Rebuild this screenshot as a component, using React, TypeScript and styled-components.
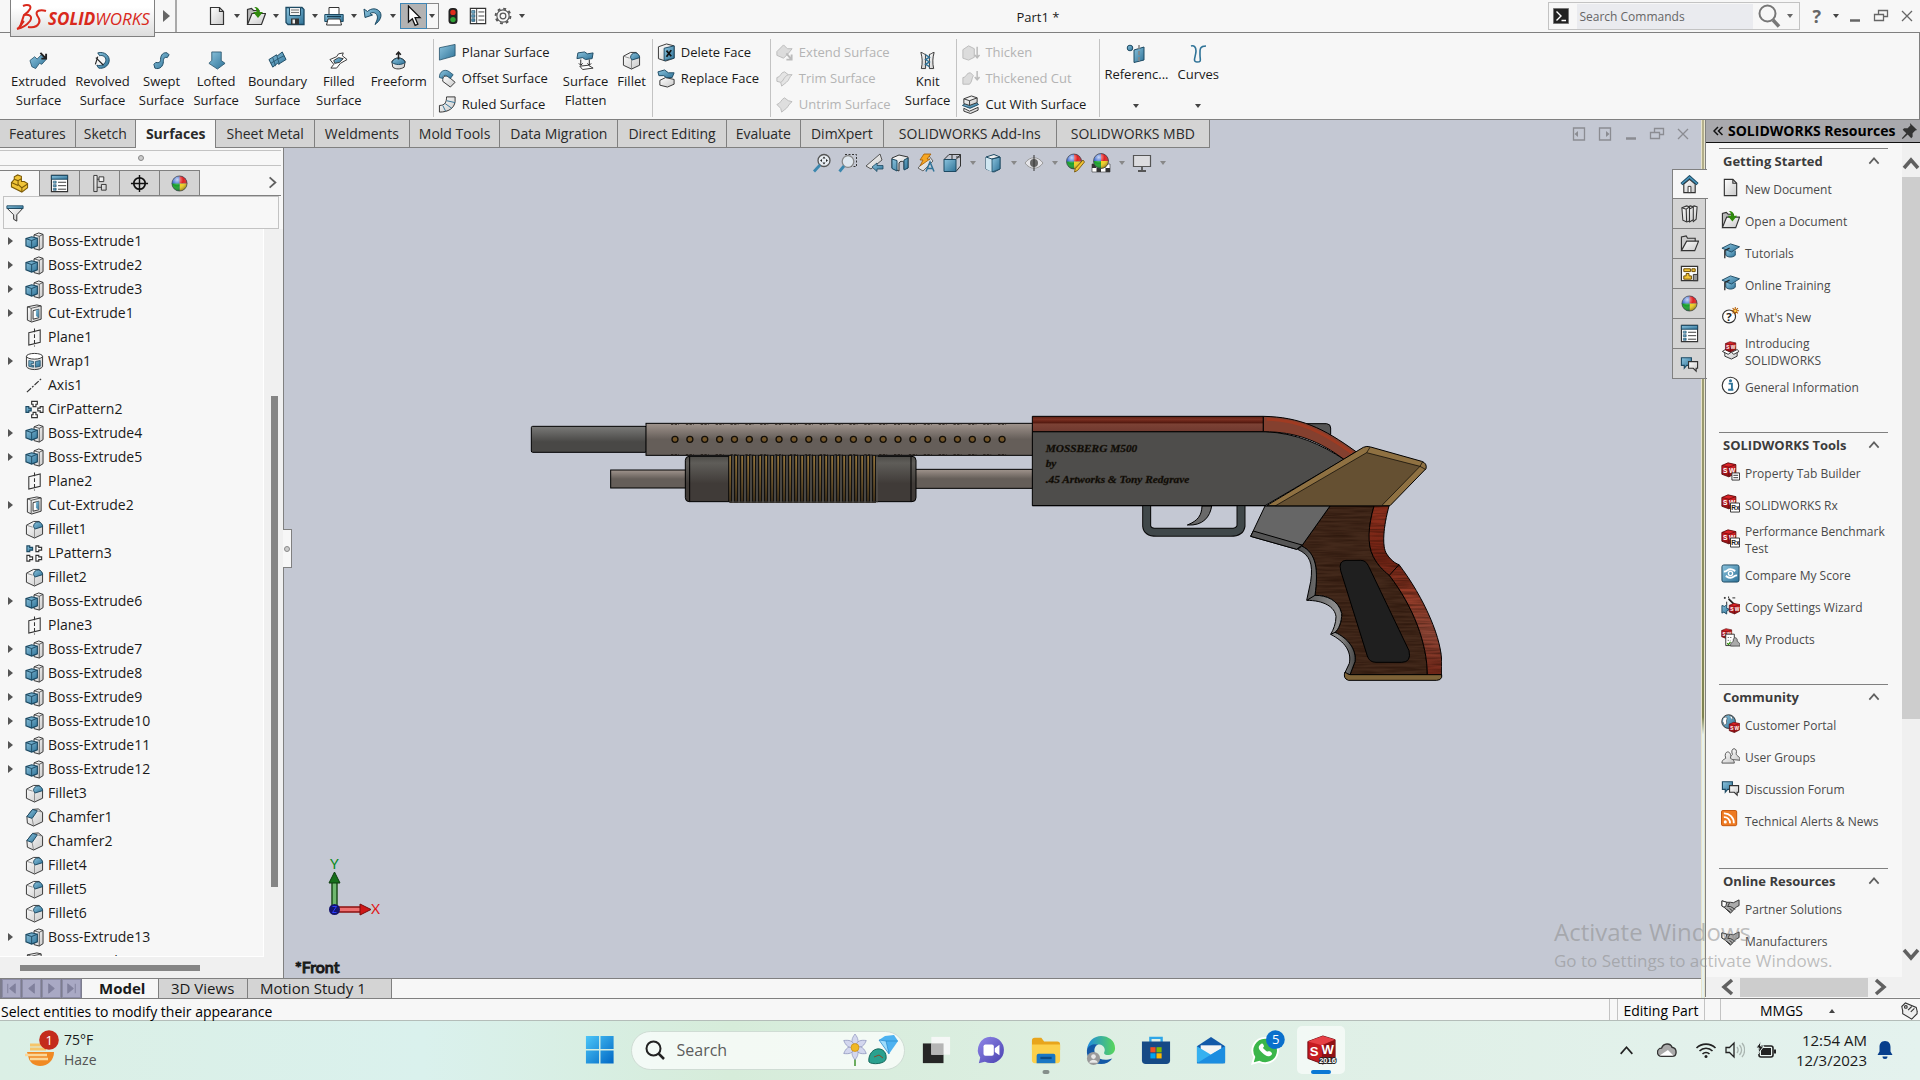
import React from 'react';
import styled, { createGlobalStyle, css } from 'styled-components';

/* ---------- theme ---------- */
const C = {
  face: '#f7f7f7',
  line: '#808080',
  soft: '#c3c3c3',
  tab: '#d4d4d4',
  view: '#c4c8d3',
  track: '#f0f0f0',
  text: '#1a1a1a',
};
const UI = '"Open Sans", "Noto Sans", sans-serif';

const Global = createGlobalStyle`
  *, *::before, *::after { box-sizing: border-box; }
  body { margin: 0; background: ${C.face}; font-family: ${UI}; color: ${C.text}; overflow: hidden; }
  button, input { font: inherit; color: inherit; }
  button { background: none; border: 0; padding: 0; margin: 0; }
  ul { list-style: none; margin: 0; padding: 0; }
  a { color: inherit; text-decoration: none; }
  h1, h2, p { margin: 0; font-weight: inherit; font-size: inherit; }
  svg { display: block; flex: none; }
`;

/* ---------- icons ---------- */
const K = '#333';
const B = 'url(#gBlue)';
const G = 'url(#gGrey)';
const R = 'url(#gRed)';
const BD = '#1d4a63';

const Defs = styled.svg`
  position: absolute;
  width: 0;
  height: 0;
`;

const Gradients = () => (
  <Defs aria-hidden="true">
    <defs>
      <linearGradient id="gBlue" x1="0" y1="0" x2="1" y2="1">
        <stop offset="0" stopColor="#8cc4de" />
        <stop offset="1" stopColor="#2f7398" />
      </linearGradient>
      <linearGradient id="gGrey" x1="0" y1="0" x2="1" y2="1">
        <stop offset="0" stopColor="#ffffff" />
        <stop offset="1" stopColor="#c9c9c9" />
      </linearGradient>
      <linearGradient id="gRed" x1="0" y1="0" x2="0" y2="1">
        <stop offset="0" stopColor="#e8262b" />
        <stop offset="1" stopColor="#8c1014" />
      </linearGradient>
      <radialGradient id="gShine" cx=".35" cy=".25" r=".8">
        <stop offset="0" stopColor="#fff" stopOpacity=".75" />
        <stop offset=".5" stopColor="#fff" stopOpacity="0" />
        <stop offset="1" stopColor="#000" stopOpacity=".45" />
      </radialGradient>
    </defs>
  </Defs>
);

const Ball = ({ x = 10, y = 10, r = 8 }) => (
  <g transform={`translate(${x} ${y})`}>
    <circle r={r} fill="#2b5fd0" />
    <path d={`M0 0V${-r}A${r} ${r} 0 0 1 ${r} 0Z`} fill="#e02020" />
    <path d={`M0 0H${r}A${r} ${r} 0 0 1 0 ${r}Z`} fill="#f2d11c" />
    <path d={`M0 0V${r}A${r} ${r} 0 0 1 ${-r} 0Z`} fill="#17a02a" />
    <circle r={r} fill="url(#gShine)" stroke="#444" strokeWidth=".7" />
  </g>
);

const Cube = ({ x = 0, y = 0, s = 1 }) => (
  <g transform={`translate(${x} ${y}) scale(${s})`}>
    <path d="M1 4L8 1l9 2v10l-8 4-8-3z" fill={R} stroke="#5a0a0c" />
    <path d="M1 4l8 2 8-3M9 6v11" fill="none" stroke="#5a0a0c" strokeWidth=".8" />
    <text x="2.4" y="12.4" fontFamily="Liberation Sans" fontWeight="700" fontSize="7.5" fill="#fff">S</text>
    <text x="9.2" y="12.4" fontFamily="Liberation Sans" fontWeight="700" fontSize="7.5" fill="#fff">W</text>
  </g>
);

const Bubbles = () => (
  <g strokeWidth="1.2">
    <path d="M1.500 4h10.500v8H7l-2.500 3v-3h-3z" fill={B} stroke={BD} />
    <path d="M9 8h9.500v7H17v3l-3-3H9z" fill={G} stroke={K} />
  </g>
);

const icons: Record<string, React.ReactNode> = {
  doc: <g stroke={K} strokeWidth="1.2"><path d="M3.500 1.500h9l4 4v13h-13z" fill={G} /><path d="M12.500 1.500v4h4" fill="none" /></g>,
  open: <g><path d="M1.500 18V3.500l4-1 2 2H13V8" fill="#bbb" stroke={K} strokeWidth="1.200" /><path d="M1.500 18.500L6 7.500h13.500l-4 11z" fill={G} stroke={K} strokeWidth="1.200" /><path d="M8 1c4 0 5.500 2 5.500 5H17l-5 6-5-6h3.500C10.500 3.500 10 2 8 1z" fill="#2f8a0c" /></g>,
  save: <g><path d="M1 1.500h16l2 2v15H3l-2-2z" fill={B} stroke={BD} strokeWidth="1.300" /><path d="M4.500 1.500h11v8h-11z" fill="#f2f2f2" stroke={BD} /><path d="M6 4h8M6 6.500h8" stroke="#777" /><path d="M6 12.500h8v6H6z" fill="#333" /><path d="M7.500 13.500h2.500v4H7.500z" fill="#eee" /></g>,
  print: <g><path d="M5 8V1.500h10V8" fill="#fff" stroke={K} /><path d="M.8 8.500h18.400v7H.8z" fill={B} stroke={BD} /><path d="M4 13h12l1.500 6h-15z" fill="#fff" stroke={K} /><path d="M3 10.500h14" stroke="#173c50" strokeWidth="1.500" /></g>,
  undo: <path d="M1 3l1 8.500L9.500 9 7 7.500c4-2.500 9 .5 7 6.500l-2 4.500C17 15 19.500 10 17 6 14 1.800 8 2 4.500 5.500z" fill={B} stroke={BD} />,
  cursor: <path d="M5 1v14.500l3.500-3 2.500 6 2.500-1-2.500-6h4.500z" fill="#fff" stroke="#111" strokeWidth="1.200" />,
  light: <g><rect x="5" y="1" width="10" height="18" rx="4" fill="#222" /><circle cx="10" cy="6" r="3" fill="#e02a1c" /><circle cx="10" cy="14" r="3" fill="#2fa335" /></g>,
  list: <g><path d="M1.500 1.500h17v17h-17z" fill="#fff" stroke={K} strokeWidth="1.300" /><path d="M8.500 2v16" stroke={K} /><path d="M3 4h3.500v3H3zM3 8.500h3.500v3H3zM3 13h3.500v3H3z" fill={B} stroke={BD} strokeWidth=".7" /><path d="M10.500 5.500H17M10.500 10H17M10.500 14.500H17" stroke={K} /></g>,
  gear: <g fill="none" stroke="#555"><circle cx="10" cy="10" r="3.200" strokeWidth="1.300" /><circle cx="10" cy="10" r="6.800" strokeWidth="1.200" /><circle cx="10" cy="10" r="8.200" strokeWidth="2.200" strokeDasharray="3.200 3.240" /></g>,
  extruded: <g><path d="M1 10l5-4 2.500 2.500L13 4l5 5-4.500 5-2.500-1-4 5.500-4-2z" fill={B} stroke={BD} strokeWidth=".8" /><path d="M12 2l6 6M18 3v5h-5" stroke="#222" strokeWidth="2" fill="none" /></g>,
  revolved: <g fill="none"><path d="M5 2c7-2 13 3 12 9-1 5-6 8-11 7l-2-3c5 1 9-1 9.500-5C14 6 10 4 7 5z" fill={B} stroke={BD} /><path d="M3 7l8 8M5 6L2.500 14" stroke="#222" strokeWidth="1.200" /></g>,
  swept: <path d="M2 14l2-2c4 1 5-1 5-3 0-5 3-8 7-7l2 2-2 3c-3-1-4 1-4 4 0 5-4 9-9 7z" fill={B} stroke={BD} />,
  lofted: <path d="M5 1h10v9l4 3-8 6-9-6 3-3z" fill={B} stroke={BD} strokeWidth=".8" />,
  boundary: <g><path d="M1 9l8-5 1 1 5-4 4 8-8 5-1-1-5 4z" fill={B} stroke={BD} /><path d="M3 13l8-5 6-3M9 4l3 10M5 7l3 9" stroke={BD} strokeWidth=".8" fill="none" /></g>,
  filled: <g stroke={K}><path d="M1 9l7-3 2-3 5-1-1 3 5 4-7 4-4 5-6 0 3-4z" fill="#fff" /><path d="M5 10l5-3 5 1-4 4-5 1z" fill={B} /></g>,
  freeform: <g><path d="M3 11c3-5 11-5 14 0l-1 6c-4 2.500-9 2.500-12 0z" fill={G} stroke={K} /><path d="M3 12c3-6 11-6 14 0-4 3-10 3-14 0z" fill={B} stroke={BD} /><path d="M10 9V2M7.500 4L10 1.200 12.500 4" stroke="#222" strokeWidth="1.600" fill="none" /></g>,
  planar: <path d="M1.500 5L18 1.500v12L1.500 18z" fill={B} stroke={BD} strokeWidth=".8" />,
  offset: <g><path d="M5 11c0-4 4-4 6-3l7 6-5 5-8-6z" fill={G} stroke={K} /><path d="M1.500 9C1 3 7-1 12 3l4 3-3 4-4-3c-2-1-4 0-4 3z" fill={B} stroke={BD} strokeWidth=".8" /></g>,
  ruled: <g><path d="M9 2h9v5C17 14 11 18 1.500 18L1.500 11C7 11 9 8 9 2z" fill={G} stroke={K} /><path d="M9 6l9 2M7.500 9l7 5M5 11l3 6" stroke="#2f7398" fill="none" /></g>,
  flatten: <g><path d="M2 2l7-1 3 2 6-1-1 6-7 1-3-2-6 1z" fill={B} stroke={BD} /><path d="M5 9v6M14 9v6M3 13l2 2 2-2M12 13l2 2 2-2" stroke="#222" fill="none" /><path d="M4 16l9-1 5 3-11 1.500z" fill="#fff" stroke={K} /></g>,
  fillet: <g><path d="M1.500 5.500L9 1.500l6 0 3.500 4.500v9L10 19l-8.500-4z" fill={G} stroke={K} /><path d="M9 7c0-3 2-5 5.500-5 3 1 4 3 4 5l-8 2.500z" fill={B} stroke={BD} /><path d="M10 9.500V19M1.500 5.500L8 7.500" stroke="#777" fill="none" strokeWidth=".8" /></g>,
  deleteFace: <g><path d="M1.500 4L10 1l8 2v13l-9 3-7.500-2.500z" fill={G} stroke={K} /><path d="M7.500 5.500L18 3v13L7.500 18.500z" fill={B} stroke={BD} /><path d="M10 8l5 6M15 7.500l-5 7" stroke="#111" strokeWidth="1.800" /></g>,
  replaceFace: <g><path d="M3 12l6-3 9 2v5l-7 3-8-2z" fill={G} stroke={K} /><path d="M1 3l7-2 4 3 6 0-2 5-6 0-3-2-5 0z" fill={B} stroke={BD} /></g>,
  ghost1: <g fill="#dcdcdc" stroke="#bbb"><path d="M2 9l7-7 4 4 5 0-4 5-5 5-7-3z" /><path d="M12 11l5 6M17.500 12v5.500H12" strokeWidth="2" fill="none" /></g>,
  ghost2: <g fill="#e4e4e4" stroke="#bbb"><path d="M2 9c4 0 4-6 8-6l4 3 4 0c-3 2-3 6-6 8l-5 4-1-4-4-1z" /><path d="M6 14c3-1 3-6 8-8" fill="none" /></g>,
  ghost3: <g fill="#dedede" stroke="#bbb"><path d="M2 10c4-1 4-5 8-7l4 3 4 1c-3 2-4 5-6 7l-5 4-1-4z" /></g>,
  knit: <g><path d="M3 1.500c2 0 3 2 5 2v15H3.500c1.500-6 1-12-.5-17z" fill={G} stroke={K} /><path d="M17 1.500c-2 0-3 2-5 2v15h4.500c-1.500-6-1-12 .5-17z" fill={G} stroke={K} /><path d="M8 4l4 2.500L8 9l4 2.500L8 14l4 2.500" stroke="#2f7398" strokeWidth="1.500" fill="none" /></g>,
  thicken: <g fill="#dcdcdc" stroke="#bbb"><path d="M2 7l6-4 6 3v9l-6 3-6-2z" /><path d="M17 4v11M14.500 12.500l2.500 3 2.500-3" strokeWidth="1.600" fill="none" /></g>,
  thickCut: <g fill="#dcdcdc" stroke="#bbb"><path d="M2 9c4 0 3-5 8-5l3 3c-2 3-1 6-4 9l-7 0z" /><path d="M17 2v9M14.500 8.500l2.500 3 2.500-3" strokeWidth="1.600" fill="none" /></g>,
  cutWith: <g stroke={K}><path d="M3 14l6 3 9-4v3l-8 3.500-7-2.500z" fill={G} /><path d="M1.500 11l8 3 9-4-2-2-12 1z" fill={B} stroke={BD} /><path d="M3 4l8-3 6 2v5l-8 3-6-2zM3 4l6 2 8-3M9 6v5" fill={G} /></g>,
  reference: <g><circle cx="4" cy="4" r="2.800" fill={B} stroke={BD} /><path d="M8 6l10-3v13L8 18.500z" fill={B} stroke={BD} /><path d="M13 1v18" stroke="#f0f0f0" strokeDasharray="4 2" strokeWidth="1.300" /><path d="M13 1v18" stroke="#222" strokeDasharray="4 2" strokeWidth=".8" /></g>,
  curves: <path d="M3 2c3-1 5 1 5 5 0 5-4 11 1 11s3-2 3-7-1-9 6-9" fill="none" stroke="#2f7398" strokeWidth="1.600" />,
  part: <g fill="#f0c437" stroke="#7b5a06" strokeWidth="1.100"><path d="M1.500 9l3-3.500V3l3.500-2 4 1.500V8l3 0 3.500 2v4.500l-6 4.500L1.500 13.500z" /><path d="M4.500 5.500L8.500 7v4l4 3.500V19M8.500 7L12 5M1.500 9l7 3M12.500 14.500l6-4" fill="none" /></g>,
  props: <g><path d="M1.500 1.500h17v17h-17z" fill="#fff" stroke={K} strokeWidth="1.200" /><path d="M1.500 1.500h17v4h-17z" fill={B} stroke={BD} /><path d="M3.500 7.500h3v2.200h-3zM3.500 11.200h3v2.200h-3zM3.500 15h3v2.200h-3z" fill={B} stroke={BD} strokeWidth=".6" /><path d="M8.500 8.700H17M8.500 12.300H17M8.500 16H17" stroke={K} /></g>,
  config: <g fill={G} stroke={K}><path d="M4 1.500h3.500v17H4z" /><path d="M9.500 3h5v5h-5zM12 11h5v6h-5z" /><path d="M7.500 5.500h2M7.500 14H12" /></g>,
  target: <g fill="none" stroke="#111" strokeWidth="1.800"><circle cx="10" cy="10" r="6" /><path d="M10 1v18M1 10h18" strokeWidth="1.500" /></g>,
  ball: <Ball />,
  filter: <g><path d="M1.500 5h17l-6.500 7v7l-3.500-2v-5z" fill={G} stroke={K} strokeWidth="1.100" /><path d="M1 2h18v3H1z" fill={B} stroke={BD} /></g>,
  boss: <g><path d="M9.500 3l5-2 4.500 1.500v14L15 19l-5.500-1.500z" fill={G} stroke={K} /><path d="M15 4.500V19M9.500 3l5.500 1.500 4-2" stroke={K} fill="none" strokeWidth=".8" /><path d="M1 7l6-2 6 1.500v8L7 17l-6-2.500z" fill={B} stroke={BD} strokeWidth="1.200" /><path d="M1 7l6 2 6-2.500M7 9v8" stroke={BD} fill="none" /></g>,
  cut: <g><path d="M2.500 3l10-2 4.500 1v14l-10 3-4.500-2z" fill={G} stroke={K} /><path d="M2.500 3l4 1.500v14M6.500 4.500L17 2" fill="none" stroke={K} strokeWidth=".8" /><path d="M8.500 7l6-1.500v9l-6 1.500z" fill="#fff" stroke={K} /><path d="M11.500 6.300l3-.8v9l-3-2z" fill={B} /></g>,
  plane: <g fill="none" stroke={K} strokeWidth="1.100"><path d="M4 5l12-3v13L4 18z" /><path d="M10 .5v19" strokeDasharray="4 2" /></g>,
  wrap: <g><path d="M1.500 4.500v11c3 4 14 4 17 0v-11" fill={G} stroke={K} /><ellipse cx="10" cy="4.500" rx="8.500" ry="3" fill="#fff" stroke={K} /><path d="M4 9l5 1v2H6.500v2H9v2l-5-1zM11 10l5-1v6l-5 1z" fill={B} stroke={BD} strokeWidth=".8" /></g>,
  axis: <path d="M2 17L18 2" stroke={K} strokeDasharray="6 1.500 2 1.500" strokeWidth="1.200" />,
  cir: <g fill="#fff" stroke={K} strokeWidth="1.200"><path d="M7 1.500h6v3h-1.500v2.500h-3V4.500H7zM7 18.500h6v-3h-1.500V13h-3v2.500H7zM19 7v6h-3v-1.500h-2.500v-3H16V7z" /><path d="M1 7v6h3v-1.500h2.500v-3H4V7z" fill={B} stroke={BD} /></g>,
  lin: <g fill="#fff" stroke={K} strokeWidth="1.200"><path d="M2 2v6h3V6.500h3v-3H5V2z" fill={B} stroke={BD} /><path d="M11.500 2v6h3V6.500h3v-3h-3V2zM2 12v6h3v-1.500h3v-3H5V12zM11.500 12v6h3v-1.500h3v-3h-3V12z" /></g>,
  chamfer: <g><path d="M2 9l6-7.500 6-.5 4.500 3.500v10L9 19l-6.500-3z" fill={G} stroke={K} /><path d="M2 9l6-7.500 5 1.500-5.500 8z" fill={B} stroke={BD} /><path d="M7.500 11L9 19M13 3l5.500 1.500" stroke="#777" fill="none" strokeWidth=".8" /></g>,
  zoomFit: <g><circle cx="12" cy="7.500" r="6" fill="#e8edf2" stroke="#555" strokeWidth="1.300" /><path d="M8 12L2 18.500" stroke="#3b87ae" strokeWidth="2.800" /><path d="M12 3.500l1.500 2h-3zM12 11.500l1.500-2h-3zM8 7.500l2-1.500v3zM16 7.500l-2-1.500v3z" fill="#222" /></g>,
  zoomArea: <g><path d="M7 1.500h11.500v12H13" stroke="#333" fill="none" strokeDasharray="2 1.500" /><circle cx="10" cy="8.500" r="5.800" fill="#dfe7ee" stroke="#888" strokeWidth="1.300" /><path d="M6 13l-4.500 5.500" stroke="#3b87ae" strokeWidth="2.800" /></g>,
  prev: <g><path d="M16 1l2 6-11 9-5-3z" fill={G} stroke="#555" /><path d="M8 14l5-4v2.500h6v3.500h-6V18.500z" fill={B} stroke={BD} strokeWidth=".8" /></g>,
  section: <g><path d="M2 5l7-3 9 2v11l-4 1V9c-2-1-4-1-5 1v8l-7-3z" fill={G} stroke={K} /><path d="M2 6l5 1.500V18l-5-2.500zM14 7l4-2v10l-4 2z" fill={B} stroke={BD} /></g>,
  bolt: <g><path d="M13 3l4 5-10 10-5-3z" fill={G} stroke="#666" /><path d="M8 1h7l-4 5h3L4 13l3-6H4z" fill="#f5a623" stroke="#a35a00" strokeWidth=".8" /><path d="M10 18.500L14 9l4 9.500M11.500 15.500h5" stroke="#2f7398" strokeWidth="1.500" fill="none" /></g>,
  orient: <g><path d="M2 6.500L7 1.500h11.500V13L14 18.500M14 6.500l4.500-5M10 1.500v5M14 4h4.500" fill="none" stroke={K} /><path d="M2 6.500h12v12H2z" fill={B} stroke={BD} /></g>,
  display: <g><path d="M3 4l8-2.500L17 4v12l-6 3-8-3z" fill={G} stroke={BD} /><path d="M3 4l6 2v13l-6-3z" fill="#cfe6f1" /><path d="M9 6l8-2v12l-8 3z" fill={B} stroke={BD} strokeWidth=".8" /><path d="M3 4l6 2 8-2" fill="none" stroke={BD} /></g>,
  eye: <g><path d="M1 10c5-7 13-7 18 0-5 7-13 7-18 0z" fill="#e4e4e8" stroke="#999" /><circle cx="10" cy="10" r="4" fill="#666" /><path d="M10 2v16" stroke="#333" /></g>,
  appear: <g><Ball x={9} y={8.5} r={7.5} /><path d="M18 7l1.500 2-7 8.500-3 1.500.8-3.500z" fill="#f0c437" stroke="#6b4a00" strokeWidth=".8" /></g>,
  scene: <g><path d="M1 11h18v8H1z" fill="#fff" stroke="#333" strokeWidth=".6" /><path d="M1 11h4.500v4H1zM10 11h4.500v4H10zM5.500 15H10v4H5.500zM14.500 15H19v4h-4.500z" fill="#333" /><Ball x={10} y={8} r={7.5} /></g>,
  monitor: <g><path d="M1.500 2.500h17v11h-17z" fill="#dcdcdf" stroke="#555" strokeWidth="1.200" /><path d="M10 13.500v4M6 18h8" stroke="#555" strokeWidth="1.800" /></g>,
  home: <g><path d="M4 9.500l6-5 6 5v9H4z" fill={G} stroke={K} strokeWidth="1.200" /><path d="M8.500 12h3v6.500h-3z" fill="#fff" stroke={K} /><path d="M1.500 9.500L10 2l8.500 7.500" stroke={BD} strokeWidth="3.200" fill="none" /><path d="M2 9.200L10 2.300l8 6.900" stroke="#4a97bd" strokeWidth="1.300" fill="none" /></g>,
  books: <g fill={G} stroke={K} strokeWidth="1.100"><path d="M10 4l5-2 3 1-1 13-3 2.500z" /><path d="M6 4l5-2 3 1v13.500L10 19z" /><path d="M2 4l5-2 3 1v15l-3 1-4-2z" /><path d="M2 4l4.500 1.500L10 3M6.500 5.500L7 19M14 3l-3.500 2" fill="none" /></g>,
  folder: <g fill={G} stroke={K} strokeWidth="1.200"><path d="M1.500 17V3l5-1 1.500 2.500h8V8" fill="#ccc" /><path d="M1.500 17.500L7 7.500h12.500L15.500 17.500z" /></g>,
  palette: <g><path d="M1.500 2.500h17v15h-17z" fill="#fff" stroke={K} strokeWidth="1.300" /><path d="M4 5h7v3H4zM12.500 5H16v3h-3.500zM6.500 10h3v2.500H12V16H4v-3.500h2.500z" fill="#f0c437" stroke="#6b4a00" /><path d="M14 11h4.500v6.500H14z" fill="#999" stroke={K} /></g>,
  bubbles: <Bubbles />,
  cap: <g><path d="M5 9v5c3 2.500 7 2.500 10 0V9" fill={B} stroke={BD} /><path d="M1 6.500L10 2l9.500 3L11 10.500z" fill={B} stroke={BD} /><path d="M9 6.500L4 9v8" fill="none" stroke="#222" strokeWidth="1.300" /></g>,
  whatsnew: <g><circle cx="8.500" cy="11" r="6.800" fill="#fff" stroke={K} strokeWidth="1.200" /><text x="5.500" y="15.500" fontFamily="Open Sans" fontWeight="700" fontSize="12" fill="#222">?</text><path d="M15 1v8M11 5h8M12.200 2.200l5.600 5.600M17.800 2.200l-5.600 5.600" stroke="#b35a00" strokeWidth="1.100" /><circle cx="15" cy="5" r="1.300" fill="#ffd34a" /></g>,
  intro: <g><path d="M4 10l6-2 7 2v6l-6 3-7-3z" fill={G} stroke={K} /><path d="M1.500 11l3-2 6 3-3 2zM11 12l6-3 2 2-5.500 3z" fill="#fff" stroke={K} /><Cube x={4} y={0} s={0.68} /></g>,
  info: <g><circle cx="10" cy="10" r="8.700" fill="#fff" stroke={K} strokeWidth="1.200" /><path d="M8 8h3.500v6.500H13M7.500 14.500h5.500" stroke="#2f7398" strokeWidth="2" fill="none" /><circle cx="10" cy="5" r="1.600" fill="#2f7398" /></g>,
  swTab: <g><Cube s={0.92} /><path d="M11.500 11.500h8v7.500h-8z" fill="#fff" stroke={K} /><path d="M13 14h5M13 16.500h5" stroke={K} /></g>,
  swRx: <g><Cube s={0.92} /><path d="M10 9.500h9.500V19H10z" fill="#fff" stroke={K} /><text x="10.800" y="17" fontFamily="Liberation Sans" fontWeight="700" fontSize="7" fill="#222">Rx</text></g>,
  compare: <g><rect x="1" y="1" width="18" height="18" rx="2" fill={B} stroke={BD} /><path d="M3 8c4 0 3-2.500 7-2.500 3 0 4 1.500 5 2M17 12c-4 0-3 2.500-7 2.500-3 0-4-1.500-5-2" stroke="#fff" strokeWidth="2" fill="none" /><circle cx="10" cy="10" r="2.200" fill="none" stroke="#fff" strokeWidth="1.400" /></g>,
  wizard: <g><path d="M1 10l3 1 2-2v4l3 1-3 2v3l-3-2-2 1z" fill={B} stroke={BD} /><path d="M8 3l8 8" stroke="#222" strokeWidth="1.800" /><path d="M3 2h2M4 1v2M8 .5v2M12 2h3M6 6v3" stroke="#222" /><Cube x={8} y={7} s={0.7} /></g>,
  products: <g><Cube s={0.66} /><path d="M5 6.500h9v12H5z" fill="#fff" stroke={K} /><path d="M7 10h5M7 13h3" stroke="#777" strokeDasharray="1.500 1" /><path d="M6.500 16l1.500 1.500 2-3" stroke="#2f8a0c" fill="none" strokeWidth="1.300" /><path d="M10 19c0-4 2-4 3-5-1-5 5-5 4 0 1 1 3 1 3 5z" fill="#aaa" stroke="#555" /></g>,
  portal: <g><circle cx="8" cy="8" r="7.200" fill={B} stroke={K} /><path d="M3 4c3-2 4 0 3 2s1 3-1 5-2-1-3-3M9 2c3 0 4 2 3 4" fill="#fff" stroke={K} strokeWidth=".6" /><Cube x={8} y={8} s={0.68} /></g>,
  groups: <g fill={G} stroke="#555"><path d="M9 14c0-4 2-3 3-5-3-8 6-8 4-1 0 3 4 2 4 7z" /><path d="M1 18c0-4 3-4 4-5-3-9 7-9 5 0 1 1 4 1 4 5z" /></g>,
  rss: <g><rect x=".5" y=".5" width="16" height="16" rx="1.500" fill="#ee7a22" stroke="#c4540a" /><circle cx="4.500" cy="12.500" r="1.600" fill="#fff" /><path d="M3 7.500a6 6 0 0 1 6.500 6.500M3 3.500A10 10 0 0 1 13.500 14" stroke="#fff" strokeWidth="1.900" fill="none" /></g>,
  hands: <g><path d="M1 3l5 1.500h4l3 .5 6-3v6l-3 1.500L10 16l-7-6.500-2-1z" fill="#aaa" stroke={K} /><path d="M1 3l5 1.500L5 9 3 9.500l-2-1z" fill="#fff" stroke={K} /><path d="M9 5L7 9h3l5 3M6 12l4 3M9 11l3 2.500" fill="none" stroke={K} /></g>,
  tag: <g fill="#eee" stroke={K} strokeWidth="1.200"><path d="M2 5l4-4 12 5 1 4-6 7L3 10z" /><path d="M3 10v3l10 6 6-6v-3" /><circle cx="6.500" cy="5.500" r="1.500" /><path d="M9 9l4-4M12 11l4-4" /></g>,
  pin: <g fill="#333"><path d="M11 1l8 8-2 .5-3 3 0 4-1.500 1.500-4-4L3 19l-1-1 5-5.500-4-4L4.500 7H8.500l3-3z" /></g>,
};

const Icon = ({ name, size = 20 }: { name: string; size?: number }) => (
  <svg width={size} height={size} viewBox="0 0 20 20" aria-hidden="true">{icons[name]}</svg>
);

const Caret = styled.span<{ $tone?: string; $up?: boolean; $gap?: number }>`
  width: 0;
  height: 0;
  border: 3px solid transparent;
  ${(p) => (p.$up ? 'border-top-width: 0' : 'border-bottom-width: 0')};
  ${(p) => `border-${p.$up ? 'bottom' : 'top'}: 4px solid ${p.$tone ?? '#444'}`};
  margin: 0 ${(p) => p.$gap ?? 0}px;
`;

/* window control glyphs */
const Glyph = ({ kind, tone = '#777' }: { kind: string; tone?: string }) => (
  <svg width="16" height="16" viewBox="0 0 16 16" fill="none" stroke={tone} strokeWidth="1.3" aria-hidden="true">
    {kind === 'min' && <path d="M3 12.500h10" strokeWidth="2.500" />}
    {kind === 'restore' && <path d="M5.500 6V2.500h9v6H11M1.500 6.500h9v6h-9z" />}
    {kind === 'close' && <path d="M3 3l10 10M13 3L3 13" />}
    {kind === 'prev' && <g><path d="M2.500 2h11v12h-11z" /><path d="M7 5v6L3.500 8z" fill={tone} stroke="none" /></g>}
    {kind === 'next' && <g><path d="M2.500 2h11v12h-11z" /><path d="M9 5v6l3.500-3z" fill={tone} stroke="none" /></g>}
  </svg>
);

/* ---------- shell ---------- */
const Page = styled.div`
  display: flex;
  flex-direction: column;
  height: 100vh;
  background: ${C.face};
`;

/* ---------- title bar ---------- */
const TitleBar = styled.header`
  display: grid;
  grid-template-columns: 1fr auto 1fr;
  align-items: center;
  height: 33px;
  flex: none;
  border-bottom: 1px solid ${C.line};
  padding-left: 10px;
`;
const TitleLeft = styled.div`
  display: flex;
  align-items: center;
  height: 32px;
`;
const LogoBox = styled.div`
  position: relative;
  z-index: 2;
  align-self: flex-start;
  display: flex;
  align-items: center;
  width: 145px;
  height: 37px;
  padding: 0 4px;
  gap: 1px;
  border: 1px solid ${C.line};
  border-top: 0;
  background: linear-gradient(180deg, #fff 20%, #ddd);
  color: #d9291c;
  font-size: 17px;
  font-style: italic;
  b { font-weight: 700; }
`;
const Expander = styled.button`
  width: 22px;
  height: 32px;
  padding-left: 8px;
  border-right: 2px solid #aaa;
  &::before {
    content: '';
    display: block;
    width: 0;
    border: 6px solid transparent;
    border-left: 7px solid #666;
    border-right: 0;
  }
`;
const QuickBar = styled.div`
  display: flex;
  align-items: center;
  margin-left: 30px;
`;
const QuickItem = styled.button<{ $w?: number }>`
  display: flex;
  align-items: center;
  width: ${(p) => p.$w ?? 39}px;
  gap: 7px;
`;
const SelectTool = styled.div`
  display: flex;
  height: 26px;
  width: 39px;
  border: 1px solid #888;
  margin: 0 5px 0 -2px;
`;
const SelectMain = styled.button`
  width: 25px;
  display: grid;
  place-items: center;
  background: #b3b3b3;
  outline: 1px solid #3f86b5;
`;
const SelectMore = styled.button`
  flex: 1;
  display: grid;
  place-items: center;
`;
const DocTitle = styled.h1`
  font-size: 13px;
  line-height: 18px;
  padding: 2px 0 0 146px;
`;
const TitleRight = styled.div`
  display: flex;
  align-items: center;
  justify-content: flex-end;
`;
const SearchBox = styled.div`
  display: flex;
  align-items: center;
  width: 252px;
  height: 28px;
  border: 1px solid ${C.soft};
  padding: 0 4px;
  margin-right: 12px;
  gap: 4px;
`;
const SearchInput = styled.input`
  flex: 1;
  min-width: 0;
  height: 25px;
  border: 0;
  margin-left: 4px;
  padding: 0 2px;
  background: #eaebef;
  font-size: 12px;
  &::placeholder { color: #666; opacity: 1; }
`;
const HelpButton = styled.button`
  display: flex;
  align-items: center;
  gap: 12px;
  margin-right: 3px;
  color: #666;
  font-size: 18px;
  font-weight: 700;
  line-height: 24px;
`;
const WinButton = styled.button`
  width: 26px;
  height: 24px;
  display: grid;
  place-items: center;
`;

/* ---------- ribbon ---------- */
const Ribbon = styled.div`
  display: flex;
  flex: none;
  height: 87px;
  padding: 6px 0 2px 11px;
  border-bottom: 1px solid ${C.line};
  border-right: 1px solid ${C.line};
  font-size: 13px;
  line-height: 19px;
`;
const BigGroup = styled.div`
  display: flex;
  gap: 9px;
`;
const BigButton = styled.button<{ $high?: boolean }>`
  display: flex;
  flex-direction: column;
  align-items: center;
  padding-top: ${(p) => (p.$high ? 5 : 12)}px;
  text-align: center;
  white-space: pre-line;
  svg { margin-bottom: ${(p) => (p.$high ? 1 : 2)}px; }
  ${Caret} { margin-top: 20px; }
`;
const Rule = styled.div`
  width: 1px;
  background: ${C.soft};
  margin: 0 4px 0 6px;
`;
const Stack = styled.div<{ $w: number }>`
  width: ${(p) => p.$w}px;
  display: flex;
  flex-direction: column;
`;
const SmallButton = styled.button`
  display: flex;
  align-items: center;
  gap: 5px;
  height: 26px;
  white-space: nowrap;
  &:disabled { color: #b4b4b4; }
`;

/* ---------- body ---------- */
const Body = styled.div`
  display: flex;
  flex: 1;
  min-height: 0;
`;
const Work = styled.div`
  flex: 1;
  min-width: 0;
  display: flex;
  flex-direction: column;
  background: ${C.view};
`;
const CommandTabs = styled.div`
  display: flex;
  flex: none;
  height: 28px;
  justify-content: space-between;
`;
const TabStrip = styled.div`
  display: flex;
  border-bottom: 1px solid ${C.line};
`;
const CommandTab = styled.button<{ $on?: boolean; $pad?: number }>`
  padding: 0 ${(p) => p.$pad ?? 10}px;
  font-size: 14px;
  line-height: 24px;
  background: ${(p) => (p.$on ? C.face : C.tab)};
  border-right: 1px solid ${C.line};
  font-weight: ${(p) => (p.$on ? 700 : 400)};
  color: #2a2a2a;
  white-space: nowrap;
  ${(p) => p.$on && css`margin-bottom: -1px;`}
`;
const DocControls = styled.div`
  display: flex;
  align-items: center;
  padding-right: 5px;
`;
const Panes = styled.div`
  display: flex;
  flex: 1;
  min-height: 0;
`;

/* ---------- feature tree ---------- */
const TreePane = styled.aside`
  width: 284px;
  flex: none;
  display: flex;
  flex-direction: column;
  background: ${C.face};
  border-right: 1px solid ${C.line};
  position: relative;
`;
const Grip = styled.div`
  height: 16px;
  margin: 2px 2px 4px 0;
  border: 1px solid ${C.soft};
  border-width: 1px 0;
  display: grid;
  place-items: center;
  &::before {
    content: '';
    width: 6px;
    height: 6px;
    border-radius: 50%;
    border: 1px solid #888;
    background: #ccc;
  }
`;
const ManagerTabs = styled.div`
  display: flex;
  height: 26px;
  margin-right: 2px;
  border-bottom: 1px solid ${C.line};
`;
const ManagerTab = styled.button<{ $on?: boolean }>`
  width: 40px;
  display: grid;
  place-items: center;
  border: 1px solid ${C.line};
  border-width: 1px 1px 0 0;
  background: ${(p) => (p.$on ? C.face : C.tab)};
  ${(p) => p.$on && css`margin-bottom: -1px;`}
`;
const MoreTabs = styled.button`
  margin-left: auto;
  padding-right: 2px;
`;
const FilterBox = styled.label`
  display: flex;
  align-items: center;
  gap: 4px;
  height: 33px;
  margin: 0 4px 0 3px;
  padding: 0 2px;
  border: 1px solid ${C.soft};
  input { flex: 1; min-width: 0; border: 0; background: none; outline: 0; }
`;
const TreeArea = styled.div`
  display: grid;
  grid-template-columns: 1fr 19px;
  grid-template-rows: minmax(0, 1fr) 21px;
  flex: 1;
  min-height: 0;
  background: ${C.track};
`;
const Tree = styled.ul`
  overflow: hidden;
  background: ${C.face};
  border: 1px solid #fff;
  border-width: 0 1px 1px 0;
  font-size: 14px;
  line-height: 24px;
`;
const TreeRow = styled.li<{ $leaf: boolean }>`
  display: flex;
  align-items: center;
  height: 24px;
  padding-left: 8px;
  &::before {
    content: '';
    border: 4px solid transparent;
    border-left: 5px solid ${(p) => (p.$leaf ? 'transparent' : '#555')};
    border-right: 0;
    margin-right: 12px;
  }
  span { margin-left: 4px; }
`;
const VBar = styled.div`
  padding: 167px 5px 70px 7px;
  display: flex;
  &::before { content: ''; flex: 1; background: #858585; }
`;
const HBar = styled.div`
  padding: 8px 64px 7px 20px;
  display: flex;
  &::before { content: ''; flex: 1; background: #858585; }
`;
const Splitter = styled.div`
  position: absolute;
  left: 283px;
  top: 381px;
  width: 9px;
  height: 39px;
  background: ${C.face};
  border: 1px solid ${C.line};
  border-left: 0;
  display: grid;
  place-items: center;
  &::before {
    content: '';
    width: 6px;
    height: 6px;
    border-radius: 50%;
    border: 1px solid #888;
    background: #ccc;
  }
`;

/* ---------- viewport ---------- */
const Viewport = styled.main`
  flex: 1;
  min-width: 0;
  position: relative;
  display: flex;
  flex-direction: column;
  align-items: center;
`;
const HeadsUp = styled.div`
  display: flex;
  align-items: center;
  height: 30px;
  gap: 6px;
  padding-right: 7px;
  button { display: flex; align-items: center; gap: 7px; }
`;
const Model = styled.svg`
  margin: 222px 5px 0 0;
  width: 940px;
  max-width: 100%;
  height: auto;
`;
const TriadBox = styled.div`
  position: absolute;
  left: 8px;
  bottom: 0;
`;
const ViewName = styled.p`
  padding-left: 3px;
  margin-top: 34px;
  font: 500 16px/22px Lato, ${UI};
  -webkit-text-stroke: 1px #1a1a1a;
`;

/* ---------- bottom tabs and status ---------- */
const SheetTabs = styled.div`
  display: flex;
  flex: none;
  height: 20px;
  background: ${C.face};
  border-top: 1px solid ${C.line};
`;
const SheetNav = styled.div`
  display: flex;
  padding: 0 1px 0 2px;
  background: #7d7d8e;
  gap: 1px;
  button {
    width: 19px;
    display: grid;
    place-items: center;
    background: #a9a9c4;
    border: 1px solid #8c8ca6;
  }
`;
const SheetTab = styled.button<{ $on?: boolean; $w: number }>`
  width: ${(p) => p.$w}px;
  font-size: 15px;
  line-height: 19px;
  background: ${(p) => (p.$on ? C.face : C.tab)};
  font-weight: ${(p) => (p.$on ? 700 : 400)};
  border-right: 1px solid ${C.line};
  text-align: left;
  padding-left: ${(p) => (p.$on ? 17 : 12)}px;
`;
const StatusBar = styled.footer`
  display: flex;
  flex: none;
  height: 23px;
  border: 1px solid ${C.line};
  border-width: 1px 0;
  border-bottom-color: #b4bdb9;
  font-size: 14px;
  line-height: 25px;
  padding-left: 1px;
  color: #000;
`;
const StatusText = styled.span`
  flex: 1;
`;
const StatusCell = styled.div<{ $w: number }>`
  width: ${(p) => p.$w}px;
  border-left: 1px solid ${C.soft};
  padding-top: 3px;
  line-height: 20px;
  display: flex;
  align-items: center;
  justify-content: center;
  white-space: nowrap;
`;
const UnitCell = styled(StatusCell)`
  justify-content: flex-end;
  padding-right: 2px;
`;
const UnitButton = styled.button`
  display: flex;
  align-items: center;
  gap: 26px;
  margin-right: 65px;
`;

/* ---------- task pane ---------- */
const PaneEdge = styled.div`
  width: 4px;
  flex: none;
  background: linear-gradient(180deg, #b5b08c, #7d8250 68%, #e6f1ee 70%);
  border: 1px solid #e9e5cc;
  border-width: 0 1px;
`;
const TaskPane = styled.aside`
  position: relative;
  width: 215px;
  flex: none;
  display: flex;
  flex-direction: column;
  background: ${C.face};
  border-left: 1px solid ${C.line};
  margin-bottom: 1px;
`;
const PaneHeader = styled.div`
  display: flex;
  flex: none;
  align-items: center;
  height: 23px;
  padding: 0 2px 1px 7px;
  background: #a9a9ad;
  border-bottom: 1px solid #111;
  color: #000;
  white-space: nowrap;
  h2 { flex: 1; font-size: 14px; line-height: 18px; font-weight: 700; margin-left: 5px; }
`;
const SideTabs = styled.div`
  position: absolute;
  right: 213px;
  top: 49px;
  width: 35px;
  border: 1px solid ${C.line};
  border-width: 1px 0 1px 1px;
`;
const SideTab = styled.button<{ $on?: boolean }>`
  display: grid;
  place-items: center;
  width: ${(p) => (p.$on ? 35 : 33)}px;
  height: ${(p) => (p.$on ? 29 : 30)}px;
  padding-right: ${(p) => (p.$on ? 2 : 0)}px;
  border-bottom: 1px solid ${C.line};
  background: ${(p) => (p.$on ? C.face : C.tab)};
  border-right: ${(p) => (p.$on ? 0 : 1)}px solid ${C.line};
  &:last-child { border-bottom: 0; height: 29px; }
`;
const PaneBody = styled.div`
  display: grid;
  grid-template-columns: 1fr 18px;
  grid-template-rows: minmax(0, 1fr) 20px;
  flex: 1;
  min-height: 0;
  background: ${C.track};
`;
const PaneScroll = styled.div`
  overflow: hidden;
  background: ${C.face};
  padding: 5px 14px 0 13px;
`;
const Section = styled.section<{ $h: number }>`
  height: ${(p) => p.$h}px;
  border-top: 1px solid ${C.line};
`;
const SectionHead = styled.button`
  display: flex;
  justify-content: space-between;
  align-items: center;
  width: 100%;
  padding: 0 8px 0 4px;
  font-size: 13px;
  line-height: 24px;
  font-weight: 700;
  color: #3c3c3c;
`;
const LinkRow = styled.a<{ $tall?: boolean }>`
  display: flex;
  align-items: center;
  gap: 5px;
  height: ${(p) => (p.$tall ? 38 : 32)}px;
  padding-left: 2px;
  font-size: 12px;
  line-height: 17px;
  color: #4a4a4a;
  svg { margin-bottom: 4px; }
`;
const LinkText = styled.span`
  white-space: pre;
`;
const PaneV = styled.div`
  display: flex;
  flex-direction: column;
  align-items: center;
  padding: 12px 0 14px;
  gap: 4px;
`;
const VTrack = styled.div`
  flex: 1;
  width: 100%;
  background: linear-gradient(#cdcdcd, #cdcdcd) top / 100% 71% no-repeat;
`;
const PaneH = styled.div`
  display: flex;
  align-items: center;
  padding: 0 13px;
  gap: 3px;
`;
const HTrack = styled.div`
  flex: 1;
  height: 19px;
  background: #cdcdcd;
`;
const Watermark = styled.div`
  position: absolute;
  z-index: 3;
  right: 82px;
  bottom: 107px;
  width: 284px;
  pointer-events: none;
  white-space: nowrap;
  color: rgba(140, 140, 140, 0.55);
  font-size: 17px;
  line-height: 24px;
  strong { display: block; font-weight: 400; font-size: 24px; line-height: 34px; }
`;

/* ---------- taskbar ---------- */
const Taskbar = styled.nav`
  display: grid;
  grid-template-columns: 1fr auto 1fr;
  align-items: center;
  height: 59px;
  flex: none;
  padding-bottom: 1px;
  background: linear-gradient(90deg, #dbefe5, #daf1ed 22%, #d6ecda 38%, #deefe4 60%, #e4f2ee);
`;
const Weather = styled.button`
  display: flex;
  align-items: center;
  gap: 4px;
  padding-left: 24px;
  text-align: left;
  font-size: 14px;
  line-height: 20px;
  small { display: block; font-size: 14px; color: #555; }
`;
const Apps = styled.div`
  display: flex;
  align-items: center;
  gap: 7px;
`;
const AppButton = styled.button<{ $on?: boolean; $dot?: boolean }>`
  position: relative;
  width: 48px;
  height: 48px;
  display: grid;
  place-items: center;
  border-radius: 5px;
  background: ${(p) => (p.$on ? 'rgba(255,255,255,.6)' : 'none')};
  &::after {
    content: '';
    position: absolute;
    bottom: 0;
    left: 50%;
    transform: translateX(-50%);
    height: ${(p) => (p.$on || p.$dot ? 4 : 0)}px;
    width: ${(p) => (p.$on ? 20 : 7)}px;
    border-radius: 2px;
    background: ${(p) => (p.$on ? '#0a78d4' : '#848f8a')};
  }
`;
const TaskSearch = styled.label`
  display: flex;
  align-items: center;
  width: 274px;
  height: 39px;
  padding: 0 5px 0 13px;
  border-radius: 20px;
  border: 1px solid #cfdcd4;
  background: rgba(255, 255, 255, 0.7);
  font-size: 16px;
  input { flex: 1; min-width: 0; margin-left: 12px; border: 0; background: none; padding: 0; outline: 0; }
  input::placeholder { color: #5c5c5c; opacity: 1; }
`;
const Tray = styled.div`
  display: flex;
  align-items: center;
  justify-content: flex-end;
  padding-right: 27px;
  font-size: 15px;
  line-height: 20px;
`;
const Clock = styled.button`
  text-align: right;
  margin: 0 10px 0 9px;
  span { display: block; }
`;
const TrayButton = styled.button<{ $w: number }>`
  width: ${(p) => p.$w}px;
  display: grid;
  place-items: center;
`;

/* ---------- data ---------- */
const commandTabs: [string, number?][] = [
  ['Features', 9], ['Sketch', 8], ['Surfaces'], ['Sheet Metal'], ['Weldments'], ['Mold Tools', 9], ['Data Migration', 10],
  ['Direct Editing'], ['Evaluate', 9], ['DimXpert'], ['SOLIDWORKS Add-Ins', 15], ['SOLIDWORKS MBD', 14],
];
const bigButtons = [
  ['extruded', 'Extruded\nSurface'], ['revolved', 'Revolved\nSurface'], ['swept', 'Swept\nSurface'], ['lofted', 'Lofted\nSurface'],
  ['boundary', 'Boundary\nSurface'], ['filled', 'Filled\nSurface'], ['freeform', 'Freeform'],
];
const treeText = `boss Boss-Extrude1|boss Boss-Extrude2|boss Boss-Extrude3|cut Cut-Extrude1|plane Plane1|wrap Wrap1|axis Axis1|cir CirPattern2|boss Boss-Extrude4|boss Boss-Extrude5|plane Plane2|cut Cut-Extrude2|fillet Fillet1|lin LPattern3|fillet Fillet2|boss Boss-Extrude6|plane Plane3|boss Boss-Extrude7|boss Boss-Extrude8|boss Boss-Extrude9|boss Boss-Extrude10|boss Boss-Extrude11|boss Boss-Extrude12|fillet Fillet3|chamfer Chamfer1|chamfer Chamfer2|fillet Fillet4|fillet Fillet5|fillet Fillet6|boss Boss-Extrude13|cut Cut-Extrude3`;
const tree = treeText.split('|').map((t) => t.split(' '));
const headsUp: [string, boolean][] = [
  ['zoomFit', false], ['zoomArea', false], ['prev', false], ['section', false], ['bolt', false], ['orient', true],
  ['display', true], ['eye', true], ['appear', false], ['scene', true], ['monitor', true],
];
const sections: { title: string; h: number; links: [string, string][] }[] = [
  { title: 'Getting Started', h: 284, links: [['doc', 'New Document'], ['open', 'Open a Document'], ['cap', 'Tutorials'], ['cap', 'Online Training'], ['whatsnew', "What's New"], ['intro', 'Introducing\nSOLIDWORKS'], ['info', 'General Information']] },
  { title: 'SOLIDWORKS Tools', h: 252, links: [['swTab', 'Property Tab Builder'], ['swRx', 'SOLIDWORKS Rx'], ['swRx', 'Performance Benchmark\nTest'], ['compare', 'Compare My Score'], ['wizard', 'Copy Settings Wizard'], ['products', 'My Products']] },
  { title: 'Community', h: 184, links: [['portal', 'Customer Portal'], ['groups', 'User Groups'], ['bubbles', 'Discussion Forum'], ['rss', 'Technical Alerts & News']] },
  { title: 'Online Resources', h: 120, links: [['hands', 'Partner Solutions'], ['hands', 'Manufacturers']] },
];

const Chevron = ({ dir, w = 3.5, size = 18, tone = '#606060' }: { dir: 'up' | 'down' | 'left' | 'right'; w?: number; size?: number; tone?: string }) => {
  const d = { up: 'M2 13l7-8 7 8', down: 'M2 5l7 8 7-8', left: 'M13 2L5 9l8 7', right: 'M5 2l8 7-8 7' }[dir];
  return <svg width={size} height={size} viewBox="0 0 18 18" fill="none" stroke={tone} strokeWidth={w} aria-hidden="true"><path d={d} /></svg>;
};

/* ---------- drawing of the model ---------- */
const holes = Array.from({ length: 23 }, (_, i) => 465 + i * 44.6);
const ribs = Array.from({ length: 25 }, (_, i) => 628 + i * 18);

const Gun = () => (
  <Model viewBox="0 0 2820 900" role="img" aria-label="Front view of the part">
    <defs>
      <linearGradient id="tube" x1="0" y1="0" x2="0" y2="1"><stop offset="0" stopColor="#a0948d" /><stop offset=".5" stopColor="#655e59" /><stop offset="1" stopColor="#655e59" /></linearGradient>
      <linearGradient id="muzzle" x1="0" y1="0" x2="0" y2="1"><stop offset="0" stopColor="#7a7a78" /><stop offset=".6" stopColor="#494846" /></linearGradient>
      <linearGradient id="pump" x1="0" y1="0" x2="0" y2="1"><stop offset="0" stopColor="#4e4c48" /><stop offset=".15" stopColor="#5f5d59" /><stop offset=".6" stopColor="#403b38" /></linearGradient>
      <linearGradient id="stock" x1="0" y1="0" x2="0" y2="1"><stop offset="0" stopColor="#5b2013" /><stop offset=".2" stopColor="#7b3021" /><stop offset=".42" stopColor="#541a10" /><stop offset=".5" stopColor="#7c4235" /><stop offset="1" stopColor="#70392f" /></linearGradient>
      <linearGradient id="rib" x1="0" y1="0" x2="0" y2="1"><stop offset="0" stopColor="#b08a44" /><stop offset="1" stopColor="#4e3b1d" /></linearGradient>
      <linearGradient id="back" x1="0" y1="0" x2="0" y2="1"><stop offset="0" stopColor="#95331f" /><stop offset=".3" stopColor="#6d2113" /><stop offset=".5" stopColor="#943a26" /><stop offset=".75" stopColor="#8e4636" /><stop offset="1" stopColor="#7c2a1b" /></linearGradient>
      <linearGradient id="finger" x1="0" y1="0" x2="1" y2="0"><stop offset="0" stopColor="#4a4a4a" /><stop offset=".7" stopColor="#909090" /><stop offset="1" stopColor="#4a4a4a" /></linearGradient>
      <filter id="grain" x="0" y="0" width="1" height="1" colorInterpolationFilters="sRGB">
        <feTurbulence type="fractalNoise" baseFrequency=".01 .16" numOctaves="2" seed="4" />
        <feColorMatrix values="0 0 0 0 .1  0 0 0 0 .03  0 0 0 0 0  1 0 0 0 -.35" />
        <feComposite operator="in" in2="SourceGraphic" />
        <feMerge><feMergeNode in="SourceGraphic" /><feMergeNode /></feMerge>
      </filter>
    </defs>
    <g stroke="#000" strokeWidth="3">
      <rect x="34" y="79" width="345" height="78" rx="4" fill="url(#muzzle)" />
      <rect x="272" y="210" width="226" height="54" fill="url(#tube)" />
      <rect x="1186" y="208" width="352" height="57" fill="url(#tube)" />
      <rect x="378" y="70" width="1160" height="96" fill="url(#tube)" />
      <rect x="496" y="169" width="692" height="136" rx="12" fill="url(#pump)" />
      <path d="M509 169v136M1173 169v136" />
    </g>
    {holes.map((x) => (
      <g key={x}>
        <circle cx={x} cy="118" r="9" fill="#75572a" stroke="#14100a" strokeWidth="4" />
        <path d={`M${x - 12} 72h24M${x - 12} 164h24`} stroke="#29231e" strokeWidth="4" strokeDasharray="7 4" />
      </g>
    ))}
    <path d="M628 167h440v142H628z" fill="#37332f" />
    {ribs.map((x) => (
      <g key={x}>
        <path d={`M${x} 168h5v134h-5z`} fill="url(#rib)" />
        <path d={`M${x + 6} 166v138M${x - 2} 166v138`} stroke="#0c0b0a" strokeWidth="3" />
        <path d={`M${x + 11} 166v142`} stroke="#5c5a56" strokeWidth="3" />
      </g>
    ))}
    <g transform="translate(1500 0)" stroke="#000" strokeWidth="3" strokeLinejoin="round">
      <path d="M860 71h60q12 1 12 13v20h-72z" fill="#555" />
      <path d="M37 95h700c95 5 165 38 235 83L735 317H37z" fill="#4e4d4b" />
      <path d="M37 49h693v46H37z" fill="url(#stock)" />
      <path d="M730 49c110 2 180 35 278 106l-36 23C900 125 830 95 730 95z" fill="#84402f" />
      <path d="M740 58c100 2 170 40 255 100" stroke="#a8391f" strokeWidth="8" fill="none" opacity=".8" />
      <path d="M380 318v60q2 19 30 19h222q28 0 31-19v-60" fill="none" stroke="#0a0a0a" strokeWidth="27" strokeLinejoin="miter" />
      <path d="M380 318v60q2 19 30 19h222q28 0 31-19v-60" fill="none" stroke="#40484a" strokeWidth="21" strokeLinejoin="miter" />
      <path d="M546 318h29c-5 32-25 60-73 57 33-13 43-30 44-57z" fill="#696969" />
      <path d="M37 317h700" />
      <path d="M930 318h132c-17 62-22 112-2 152 15 30 40 50 48 56 72 94 114 204 114 298H990l15-39c5-35-20-70-60-88 10-7 21-32 20-57-10-40-45-54-80-54 10-76 5-126-40-148z" fill="#43291b" filter="url(#grain)" />
      <path d="M845 438c45 22 50 72 40 148 35 0 70 14 80 54 1 25-10 50-20 57 40 18 65 53 60 88l-15 39-16-4 14-30c7-35-13-65-56-87 8-13 16-33 16-53-3-30-38-49-88-49l12-56c8-55-2-80-39-97z" fill="url(#finger)" />
      <path d="M862 600l23-14M932 703l13-6" />
      <path d="M735 318h195l-85 120-15 10-138-39z" fill="#666" />
      <path d="M700 393l146 42-16 13-138-39z" fill="#565656" />
      <path d="M1062 318h45c-17 62-22 122-7 144 12 18 25 28 37 32 73 96 133 226 128 306v26h-43c0-96-42-206-114-300-8-6-33-26-48-56-20-40-15-90 2-152z" fill="url(#back)" filter="url(#grain)" />
      <path d="M1108 526l29-32" />
      <path d="M978 481h44q15 0 23 16l122 255q8 35-22 35h-77q-20 0-26-19L962 512q-7-30 16-31z" fill="#1f1f1f" />
      <path d="M975 816q10 8 15 8h275v8q-3 9-15 9H985q-17-6-10-25z" fill="#7d6237" />
      <path d="M740 317l290-175q10-5 22-1l153 43q17 6 13 22L1110 317z" fill="#8f7142" />
      <path d="M767 317l273-159 160 41-115 118z" fill="#655032" strokeWidth="2" />
      <path d="M1040 158l10-16M1200 199l8-14M1200 199l18 10" strokeWidth="2" fill="none" />
    </g>
    <g fontFamily="Liberation Serif" fontStyle="italic" fontWeight="700" fontSize="34" fill="#0b0a08" stroke="#1d160b" strokeWidth="1">
      <text x="1577" y="156">MOSSBERG M500</text>
      <text x="1577" y="200">by</text>
      <text x="1577" y="248">.45 Artworks &amp; Tony Redgrave</text>
    </g>
  </Model>
);

const Triad = () => (
  <svg width="96" height="72" viewBox="0 -4 96 72" aria-label="Coordinate axes">
    <g fontFamily="Lato" fontSize="14">
      <text x="38" y="15" fill="#0a8a1a">Y</text>
      <text x="79" y="60" fill="#e01818">X</text>
    </g>
    <path d="M40 28h5v26h-5z" fill="#6fb86f" stroke="#1c4f1c" strokeWidth="1.500" />
    <path d="M42.500 18L48 29H37z" fill="#166e1a" stroke="#0d3d0f" />
    <path d="M44 53h25v5H44z" fill="#ee7070" stroke="#8a1010" strokeWidth="1.500" />
    <path d="M79 55.500L68 50v11z" fill="#cf1717" stroke="#7a0c0c" />
    <circle cx="42.500" cy="55.500" r="5.500" fill="#14146e" />
    <path d="M40.500 52.500h4l-4 6h4" stroke="#2b3cff" fill="none" />
  </svg>
);

/* ---------- taskbar art ---------- */
const art: Record<string, React.ReactNode> = {
  start: <g><defs><linearGradient id="win" x1="0" y1="0" x2="1" y2="1"><stop offset="0" stopColor="#4cc6f8" /><stop offset="1" stopColor="#0067c4" /></linearGradient></defs><path d="M1 1h14v14H1zM16.500 1h14v14h-14zM1 16.500h14v14H1zM16.500 16.500h14v14h-14z" fill="url(#win)" /></g>,
  tasks: <g><path d="M2 9h22v21H2z" fill="#262626" /><path d="M11 2h20v19H11z" fill="#f7f7f7" fillOpacity=".92" /><path d="M11 9h13v12H11z" fill="#b5b5b5" /></g>,
  chat: <g><defs><linearGradient id="cht" x1="0" y1="0" x2="1" y2="1"><stop offset="0" stopColor="#8f86e8" /><stop offset="1" stopColor="#4a42b0" /></linearGradient></defs><path d="M16 2a14 14 0 1 1-6.500 26.500L3 30l1.500-6A14 14 0 0 1 16 2z" fill="url(#cht)" /><rect x="8" y="10" width="11" height="12" rx="2" fill="#fff" /><path d="M20 14l5-3.500v11L20 18z" fill="#fff" /></g>,
  files: <g><path d="M1 6q0-3 3-3h7l3 4h14q3 0 3 3v6H1z" fill="#e8a51c" /><path d="M1 10h30v17q0 3-3 3H4q-3 0-3-3z" fill="#fcd04b" /><path d="M6 22q0-2 2-2h16q2 0 2 2v8H6z" fill="#1a77c4" /><path d="M10 24.500h12" stroke="#0c4b85" strokeWidth="2.500" /></g>,
  edge: <g><defs><linearGradient id="edg" x1="0" y1="0" x2="1" y2="0"><stop offset="0" stopColor="#1f8be0" /><stop offset="1" stopColor="#58d65a" /></linearGradient></defs><path d="M1 16C2 6 9 1 16 1c8 0 15 5 15 13 0 6-6 8-10 7-3-1-1-3-1-5 0-4-3-6-7-6-5 0-10 2-12 6z" fill="url(#edg)" /><path d="M1 16c1-5 7-7 12-6-5 2-5 8-2 12s9 6 17 3c-3 4-7 6-12 6C7 31 0 25 1 16z" fill="#1459a6" /><circle cx="8" cy="25" r="7" fill="#9a9a9a" /><circle cx="8" cy="23" r="2.500" fill="#e8e8e8" /><path d="M3.500 29.500c1-4 8-4 9 0z" fill="#e8e8e8" /></g>,
  store: <g><path d="M10 8V3h12v5" fill="none" stroke="#2ea6e8" strokeWidth="2.500" /><path d="M1 7h30v20q0 4-4 4H5q-4 0-4-4z" fill="#164a86" /><path d="M10 13h5.500v5.500H10z" fill="#f25022" /><path d="M16.500 13H22v5.500h-5.500z" fill="#7fba00" /><path d="M10 19.500h5.500V25H10z" fill="#00a4ef" /><path d="M16.500 19.500H22V25h-5.500z" fill="#ffb900" /></g>,
  mail: <g><path d="M1 12L16 2l15 10v18H1z" fill="#1259a8" /><path d="M5 11h22v12H5z" fill="#f4f4f4" /><path d="M1 12l15 9 15-9v16q0 2-2 2H3q-2 0-2-2z" fill="#35b1f0" /><path d="M1 30l18-11L31 12v16q0 2-2 2z" fill="#1c8de0" /></g>,
  whatsapp: <g><path d="M15 3a13.500 13.500 0 1 1-6 25.500L1.500 30.500l2-7A13.500 13.500 0 0 1 15 3z" fill="#3bb64a" stroke="#fff" strokeWidth="2" /><path d="M10 10c2-2 3-1 4 2-2 2-1 2 1 4s3 2 4 1c3 1 4 2 3 4-3 3-6 2-10-2s-5-6-2-9z" fill="#fff" /><circle cx="26" cy="5" r="10" fill="#0a70cc" /><text x="22.500" y="10" fontFamily="Open Sans" fontSize="14" fill="#fff">5</text></g>,
  sw: <g><path d="M2 7L18 1l13 4v19l-13 7-16-6z" fill="#c51a20" stroke="#6b0c10" /><path d="M2 7l15 4 14-6L18 1z" fill="#e64045" /><path d="M17 11v20l14-7V5z" fill="#8f1115" /><g fontFamily="Liberation Sans" fontWeight="700" fill="#fff"><text x="4" y="22" fontSize="14">S</text><text x="16.500" y="20" fontSize="14">W</text><text x="14" y="30" fontSize="8" stroke="#222" strokeWidth="2" paintOrder="stroke">2016</text></g></g>,
};
const ArtSvg = styled.svg`
  overflow: visible;
`;
const AppArt = ({ name }: { name: string }) => <ArtSvg width="30" height="30" viewBox="0 0 32 32" aria-hidden="true">{art[name]}</ArtSvg>;

/* ---------- parts of the page ---------- */
const Title = () => (
  <TitleBar>
    <TitleLeft>
      <LogoBox>
        <svg width="32" height="30" viewBox="0 0 32 30" fill="none" stroke="#d9291c" strokeWidth="2" aria-hidden="true">
          <path d="M8 3c4-2 9-1 7 3-1 2-3 4-6 6L5 24" />
          <path d="M9 12c5-1 9 1 6 6-3 4-8 7-13 8 3-1 4-5 7-8" />
          <path d="M31 8c-6-2-11 0-9 4 1 3 4 4 2 8-2 4-6 5-11 4" />
        </svg>
        <span><b>SOLID</b>WORKS</span>
      </LogoBox>
      <Expander aria-label="Show menu" />
      <QuickBar>
        {['doc', 'open', 'save', 'print', 'undo'].map((n) => (
          <QuickItem key={n} aria-label={n}><Icon name={n} /><Caret /></QuickItem>
        ))}
      </QuickBar>
      <SelectTool>
        <SelectMain aria-label="Select"><Icon name="cursor" size={22} /></SelectMain>
        <SelectMore aria-label="Select options"><Caret /></SelectMore>
      </SelectTool>
      <QuickItem $w={25} aria-label="Rebuild"><Icon name="light" size={18} /></QuickItem>
      <QuickItem $w={25} aria-label="File properties"><Icon name="list" size={18} /></QuickItem>
      <QuickItem aria-label="Options"><Icon name="gear" size={18} /><Caret /></QuickItem>
    </TitleLeft>
    <DocTitle>Part1 *</DocTitle>
    <TitleRight>
      <SearchBox>
        <svg width="16" height="16" viewBox="0 0 16 16" aria-hidden="true"><path d="M.5.5h15v15H.5z" fill="#222" stroke="#777" /><path d="M3.500 3.500L8 8l-4.500 4.500M8.500 12.500H13" stroke="#fff" strokeWidth="1.400" fill="none" /></svg>
        <SearchInput aria-label="Search Commands" placeholder="Search Commands" />
        <svg width="24" height="24" viewBox="0 0 24 24" fill="none" stroke="#777" aria-hidden="true"><circle cx="10.500" cy="9.500" r="8" strokeWidth="2" /><path d="M16 16l6 6.500" strokeWidth="3.500" /></svg>
        <Caret $gap={2} $tone="#666" />
      </SearchBox>
      <HelpButton>?<Caret /></HelpButton>
      {['min', 'restore', 'close'].map((k) => <WinButton key={k} aria-label={k}><Glyph kind={k} tone="#666" /></WinButton>)}
    </TitleRight>
  </TitleBar>
);

const small = (items: [string, string, boolean?][]) =>
  items.map(([icon, label, off]) => (
    <SmallButton key={label} disabled={off}><Icon name={icon} size={19} />{label}</SmallButton>
  ));

const RibbonBar = () => (
  <Ribbon>
    <BigGroup>
      {bigButtons.map(([icon, label]) => <BigButton key={label}><Icon name={icon} size={19} />{label}</BigButton>)}
    </BigGroup>
    <Rule />
    <Stack $w={125}>{small([['planar', 'Planar Surface'], ['offset', 'Offset Surface'], ['ruled', 'Ruled Surface']])}</Stack>
    <BigGroup>
      <BigButton><Icon name="flatten" size={19} />{'Surface\nFlatten'}</BigButton>
      <BigButton><Icon name="fillet" size={19} />Fillet</BigButton>
    </BigGroup>
    <Rule />
    <Stack $w={107}>{small([['deleteFace', 'Delete Face'], ['replaceFace', 'Replace Face']])}</Stack>
    <Rule />
    <Stack $w={130}>{small([['ghost1', 'Extend Surface', true], ['ghost2', 'Trim Surface', true], ['ghost3', 'Untrim Surface', true]])}</Stack>
    <BigGroup><BigButton><Icon name="knit" size={19} />{'Knit\nSurface'}</BigButton></BigGroup>
    <Rule />
    <Stack $w={132}>{small([['thicken', 'Thicken', true], ['thickCut', 'Thickened Cut', true], ['cutWith', 'Cut With Surface']])}</Stack>
    <Rule />
    <BigGroup>
      <BigButton $high><Icon name="reference" />Referenc...<Caret /></BigButton>
      <BigButton $high><Icon name="curves" />Curves<Caret /></BigButton>
    </BigGroup>
  </Ribbon>
);

const FeatureTree = () => (
  <TreePane>
    <Grip />
    <ManagerTabs>
      {['part', 'props', 'config', 'target', 'ball'].map((n, i) => (
        <ManagerTab key={n} $on={i === 0} aria-label={n}><Icon name={n} size={19} /></ManagerTab>
      ))}
      <MoreTabs aria-label="More tabs"><Chevron dir="right" w={2.5} size={13} /></MoreTabs>
    </ManagerTabs>
    <FilterBox><Icon name="filter" size={18} /><input aria-label="Filter features" /></FilterBox>
    <TreeArea>
      <Tree>
        {tree.map(([icon, label]) => (
          <TreeRow key={label} $leaf={!['boss', 'cut', 'wrap'].includes(icon)}>
            <Icon name={icon} size={19} /><span>{label}</span>
          </TreeRow>
        ))}
      </Tree>
      <VBar />
      <HBar />
    </TreeArea>
    <Splitter />
  </TreePane>
);

const Resources = () => (
  <TaskPane>
    <PaneHeader>
      <svg width="10" height="10" viewBox="0 0 10 10" fill="none" stroke="#111" strokeWidth="1.500" aria-hidden="true"><path d="M5 1L1 5l4 4M9.500 1l-4 4 4 4" /></svg>
      <h2>SOLIDWORKS Resources</h2>
      <Icon name="pin" size={18} />
    </PaneHeader>
    <SideTabs>
      {['home', 'books', 'folder', 'palette', 'ball', 'props', 'bubbles'].map((n, i) => (
        <SideTab key={n} $on={i === 0} aria-label={n}><Icon name={n} size={19} /></SideTab>
      ))}
    </SideTabs>
    <PaneBody>
      <PaneScroll>
        {sections.map((s) => (
          <Section key={s.title} $h={s.h}>
            <SectionHead>{s.title}<Chevron dir="up" w={2.5} size={12} /></SectionHead>
            {s.links.map(([icon, label]) => (
              <LinkRow key={label} href="#" $tall={label.includes('\n')}>
                <Icon name={icon} size={19} /><LinkText>{label}</LinkText>
              </LinkRow>
            ))}
          </Section>
        ))}
      </PaneScroll>
      <PaneV><Chevron dir="up" /><VTrack /><Chevron dir="down" /></PaneV>
      <PaneH><Chevron dir="left" /><HTrack /><Chevron dir="right" /></PaneH>
    </PaneBody>
  </TaskPane>
);

const WindowsBar = () => (
  <Taskbar>
    <Weather>
      <svg width="36" height="40" viewBox="0 0 36 40" aria-hidden="true">
        <path d="M3 22h27c0 8-6 14-14 14-6 0-10-4-11-7z" fill="#f08a24" />
        <path d="M6 15h12M6 19h16" stroke="#f6c56a" strokeWidth="3" />
        <path d="M1 25h22M6 29h18" stroke="#fad79a" strokeWidth="2.500" />
        <circle cx="25" cy="10" r="9.800" fill="#c42b1c" />
        <text x="21.500" y="15" fontFamily="Open Sans" fontSize="13" fill="#fff">1</text>
      </svg>
      <span>75°F<small>Haze</small></span>
    </Weather>
    <Apps>
      <AppButton aria-label="Start"><AppArt name="start" /></AppButton>
      <TaskSearch>
        <svg width="20" height="20" viewBox="0 0 20 20" fill="none" stroke="#222" strokeWidth="2" aria-hidden="true"><circle cx="8.500" cy="8.500" r="7" /><path d="M13.500 13.500L19 19" strokeWidth="2.500" /></svg>
        <input aria-label="Search" placeholder="Search" />
        <svg width="58" height="34" viewBox="0 0 58 34" aria-hidden="true">
          <path d="M14 18v15" stroke="#4a9a3a" strokeWidth="1.600" />
          <g fill="#d3d7ee" stroke="#8f95bd" strokeWidth=".7">
            {[0, 60, 120, 180, 240, 300].map((a) => <path key={a} transform={`rotate(${a} 14 14)`} d="M14 14c-5-5-3-9 0-13 3 4 5 8 0 13z" />)}
          </g>
          <circle cx="14" cy="14.500" r="4" fill="#f0b824" stroke="#c98c10" strokeWidth=".7" />
          <path d="M28 29c-1-5 2-12 8-13 6-1 10 4 9 10-1 5-14 6-17 3z" fill="#2aa18f" stroke="#16695d" /><path d="M33 24l5-2 4 3" stroke="#8a4a2a" fill="none" />
          <path d="M38 7l6-4 9-1 4 6-9 13z" fill="#4db2f0" /><path d="M38 7l7 1 3 13zM45 8l12 0" fill="#9fdcfb" stroke="#1d7fc4" strokeWidth=".6" />
        </svg>
      </TaskSearch>
      <AppButton aria-label="Task view"><AppArt name="tasks" /></AppButton>
      <AppButton aria-label="Chat"><AppArt name="chat" /></AppButton>
      <AppButton $dot aria-label="File Explorer"><AppArt name="files" /></AppButton>
      <AppButton aria-label="Edge"><AppArt name="edge" /></AppButton>
      <AppButton aria-label="Store"><AppArt name="store" /></AppButton>
      <AppButton aria-label="Mail"><AppArt name="mail" /></AppButton>
      <AppButton aria-label="WhatsApp"><AppArt name="whatsapp" /></AppButton>
      <AppButton $on aria-label="SOLIDWORKS 2016"><AppArt name="sw" /></AppButton>
    </Apps>
    <Tray>
      <TrayButton $w={40} aria-label="Hidden icons"><Chevron dir="up" w={2} size={15} tone="#222" /></TrayButton>
      <TrayButton $w={40} aria-label="OneDrive">
        <svg width="20" height="16" viewBox="0 0 22 16" aria-hidden="true"><path d="M5 15a4.500 4.500 0 0 1 0-9C7 0 15 0 16.500 5c6 1 6 10 0 10z" fill="#aaa" stroke="#333" strokeWidth="1.500" /><path d="M3 14l9-6 6 6z" fill="#fff" /></svg>
      </TrayButton>
      <TrayButton $w={38} aria-label="Network">
        <svg width="22" height="18" viewBox="0 0 22 18" fill="none" stroke="#222" strokeWidth="1.600" aria-hidden="true"><path d="M1.500 7a13.500 13.500 0 0 1 19 0M4.500 10a9 9 0 0 1 13 0M7.500 13a5 5 0 0 1 7 0" /><circle cx="11" cy="15.500" r="1.500" fill="#222" stroke="none" /></svg>
      </TrayButton>
      <TrayButton $w={20} aria-label="Volume">
        <svg width="20" height="18" viewBox="0 0 20 18" fill="none" stroke="#222" strokeWidth="1.300" aria-hidden="true"><path d="M1 6.500h3.500L9 2v14l-4.500-4.500H1z" /><path d="M12 6c1.500 2 1.500 4 0 6M14.500 4c2.500 3 2.500 7 0 10M17 2c3.500 4 3.500 10 0 14" stroke="#aab5b0" /></svg>
      </TrayButton>
      <TrayButton $w={42} aria-label="Battery">
        <svg width="22" height="18" viewBox="0 0 22 18" aria-hidden="true"><rect x="4" y="5" width="14" height="11" rx="2" fill="#eaf4f0" stroke="#222" strokeWidth="1.600" /><path d="M6 7h10v7H6z" fill="#222" /><path d="M20 8.500v4" stroke="#222" strokeWidth="2" /><path d="M6 0L1 7h3l-1 6 6-8H5.500z" fill="#222" stroke="#e4f2ee" strokeWidth="1" /></svg>
      </TrayButton>
      <Clock><span>12:54 AM</span><span>12/3/2023</span></Clock>
      <TrayButton $w={16} aria-label="Notifications">
        <svg width="16" height="20" viewBox="0 0 16 20" fill="#083f8c" aria-hidden="true"><path d="M8 1c4 0 5.500 3 5.500 6v4.500l2 3.500H.5l2-3.500V7C2.500 4 4 1 8 1zM5.500 16.500h5a2.500 2.500 0 0 1-5 0z" /></svg>
      </TrayButton>
    </Tray>
  </Taskbar>
);

const navPaths = ['M4 3v10M12 3L6 8l6 5z', 'M11 3L5 8l6 5z', 'M5 3l6 5-6 5z', 'M12 3v10M4 3l6 5-6 5z'];

export default function App() {
  return (
    <Page>
      <Global />
      <Gradients />
      <Title />
      <RibbonBar />
      <Body>
        <Work>
          <CommandTabs>
            <TabStrip>
              {commandTabs.map(([label, pad]) => (
                <CommandTab key={label} $on={label === 'Surfaces'} $pad={pad}>{label}</CommandTab>
              ))}
            </TabStrip>
            <DocControls>
              {['prev', 'next', 'min', 'restore', 'close'].map((k) => <WinButton key={k} aria-label={k}><Glyph kind={k} tone="#8b8c92" /></WinButton>)}
            </DocControls>
          </CommandTabs>
          <Panes>
            <FeatureTree />
            <Viewport>
              <HeadsUp>
                {headsUp.map(([n, more]) => (
                  <button key={n} aria-label={n}><Icon name={n} />{more && <Caret $tone="#888" $gap={1} />}</button>
                ))}
              </HeadsUp>
              <Gun />
              <TriadBox>
                <Triad />
                <ViewName>*Front</ViewName>
              </TriadBox>
            </Viewport>
          </Panes>
          <SheetTabs>
            <SheetNav>
              {navPaths.map((d) => (
                <button key={d} aria-label="Scroll tabs"><svg width="15" height="15" viewBox="0 0 16 16" fill="#80809c" stroke="#80809c" aria-hidden="true"><path d={d} /></svg></button>
              ))}
            </SheetNav>
            <SheetTab $on $w={77}>Model</SheetTab>
            <SheetTab $w={89}>3D Views</SheetTab>
            <SheetTab $w={144}>Motion Study 1</SheetTab>
          </SheetTabs>
        </Work>
        <PaneEdge />
        <Resources />
      </Body>
      <StatusBar>
        <StatusText>Select entities to modify their appearance</StatusText>
        <StatusCell $w={8} />
        <StatusCell $w={87}>Editing Part</StatusCell>
        <StatusCell $w={16} />
        <UnitCell $w={200}>
          <UnitButton>MMGS<Caret $up /></UnitButton>
          <Icon name="tag" size={18} />
        </UnitCell>
      </StatusBar>
      <WindowsBar />
      <Watermark><strong>Activate Windows</strong>Go to Settings to activate Windows.</Watermark>
    </Page>
  );
}
